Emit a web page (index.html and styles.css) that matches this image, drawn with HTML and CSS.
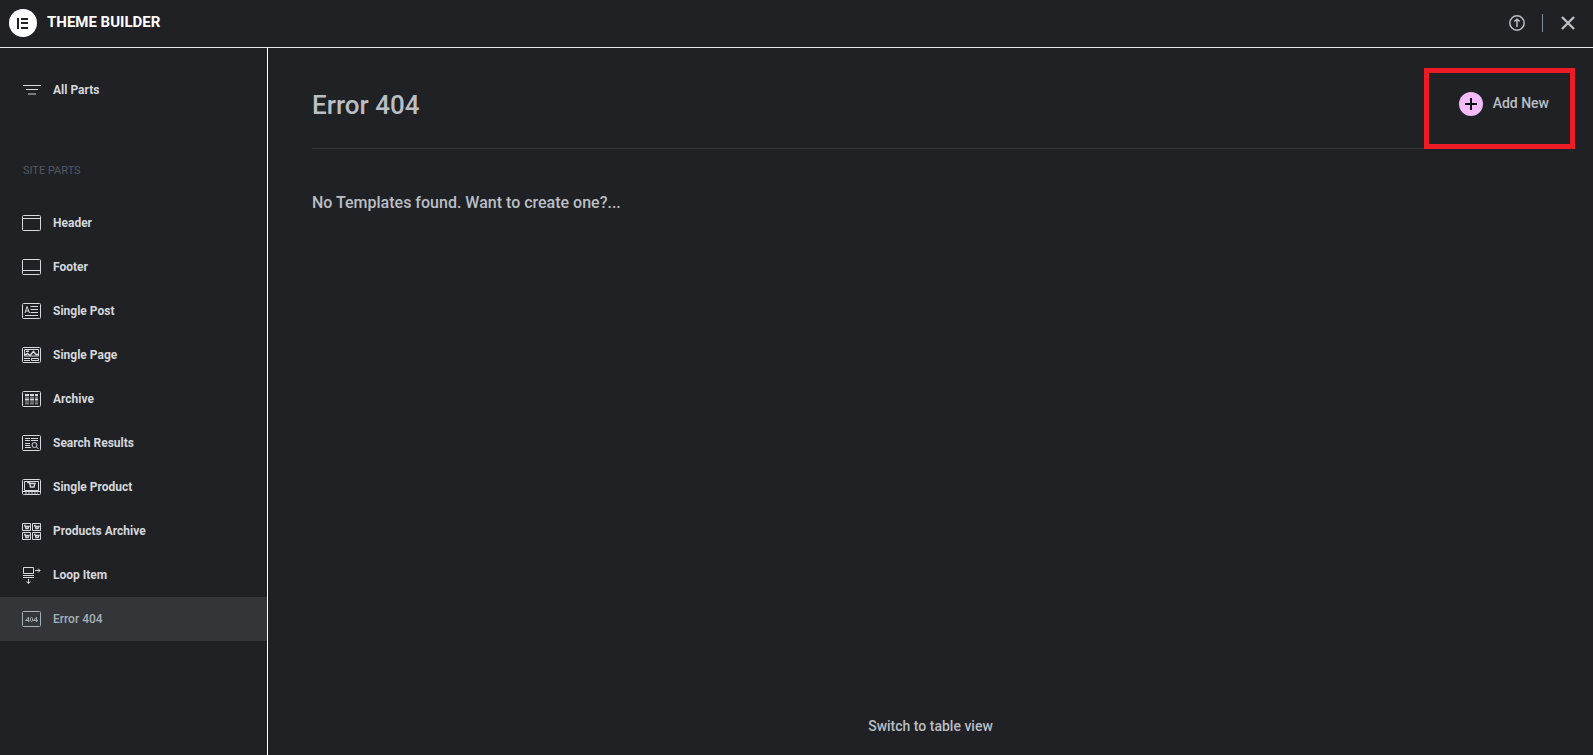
FILE: index.html
```html
<!DOCTYPE html>
<html lang="en">
<head>
    <meta charset="UTF-8">
    <meta name="viewport" content="width=device-width, initial-scale=1.0">
    <title>Theme Builder</title>
    <link rel="stylesheet" href="styles.css">
</head>
<body>

    <!-- Top bar -->
    <header class="top-bar">
        <svg class="logo" viewBox="0 0 28 28" aria-hidden="true">
            <circle cx="14" cy="14" r="14" fill="#fff"/>
            <path d="M8 9h2v11H8zM12 9h7v2h-7zM12 13h7v2h-7zM12 18h7v2h-7z" fill="#202124"/>
        </svg>
        <h1>Theme Builder</h1>
        <div class="top-actions">
            <button class="icon-btn" aria-label="Import">
                <svg width="16" height="16" viewBox="0 0 16 16">
                    <circle cx="8" cy="8" r="7.200" stroke-width="1.500"/>
                    <path d="M8 12V4.500M5.200 6.500L8 4.200l2.800 2.300" stroke-width="1.500"/>
                </svg>
            </button>
            <span class="divider"></span>
            <button class="icon-btn" aria-label="Close">
                <svg width="16" height="16" viewBox="0 0 16 16">
                    <path d="M2 2l12 12M14 2L2 14" stroke-width="2.400"/>
                </svg>
            </button>
        </div>
    </header>

    <div class="layout">

        <!-- Sidebar -->
        <nav class="sidebar">
            <a class="item" href="#">
                <svg class="icon" viewBox="0 0 19 16"><path d="M1 3.500h18M4 7.500h12M6 12h8"/></svg>
                All Parts
            </a>

            <h2>Site Parts</h2>

            <a class="item" href="#">
                <svg class="icon" viewBox="0 0 19 16"><rect x=".5" y=".5" width="18" height="15" rx="1"/><path d="M1 3.500h17"/></svg>
                Header
            </a>
            <a class="item" href="#">
                <svg class="icon" viewBox="0 0 19 16"><rect x=".5" y=".5" width="18" height="15" rx="1"/><path d="M1 11.500h17"/></svg>
                Footer
            </a>
            <a class="item" href="#">
                <svg class="icon" viewBox="0 0 19 16">
                    <rect x=".5" y=".5" width="18" height="15" rx="1"/>
                    <path d="M3 10l2-6.500L7.500 10M4 8h3M8.500 3.500H16M8.500 6.500H16M8.500 9.500H16M3 12.500h13"/>
                </svg>
                Single Post
            </a>
            <a class="item" href="#">
                <svg class="icon" viewBox="0 0 19 16">
                    <rect x=".5" y=".5" width="18" height="15" rx="1"/>
                    <path d="M2.500 2.500h14v6.500h-14z"/>
                    <path d="M3 8l2.500-1.500L8 8.500l3.500-4 2.500 3h2.500M4 4.200h3" stroke-width="1.500"/>
                    <path d="M2 11.500h6M2 13.500h6M9.500 11.500h7v2h-7z"/>
                </svg>
                Single Page
            </a>
            <a class="item" href="#">
                <svg class="icon" viewBox="0 0 19 16">
                    <rect x=".5" y=".5" width="18" height="15" rx="1"/>
                    <path d="M3 4h4M8 4h4M13 4h3M3 8.500h4M8 8.500h4M13 8.500h3" stroke-width="2"/>
                    <path d="M3 6.200h4M8 6.200h4M13 6.200h3M3 11h4M8 11h4M13 11h3M3 12.800h4M8 12.800h4M13 12.800h3" opacity=".7"/>
                </svg>
                Archive
            </a>
            <a class="item" href="#">
                <svg class="icon" viewBox="0 0 19 16">
                    <rect x=".5" y=".5" width="18" height="15" rx="1"/>
                    <path d="M3 3.500h5M9 3.500h7M3 5.500h5M9 5.500h7M3 8.500h5M3 10.500h5M3 12.500h6M14.500 12l2 2"/>
                    <circle cx="12.500" cy="10" r="2.500"/>
                </svg>
                Search Results
            </a>
            <a class="item" href="#">
                <svg class="icon" viewBox="0 0 19 16">
                    <rect x=".5" y=".5" width="18" height="15" rx="1"/>
                    <path d="M2.500 11.500v-9h14v9zM1 12.500h17"/>
                    <path d="M5 3.500h2.500l1 4.500h3.500l1-3.500H8" stroke-width="1.300"/>
                    <path d="M3 14h13" stroke-dasharray="2 1"/>
                </svg>
                Single Product
            </a>
            <a class="item" href="#">
                <svg class="icon" viewBox="0 0 19 16">
                    <path d="M.5.500h8v7h-8zM10.500.500h8v7h-8zM.5 9.500h8v7h-8zM10.500 9.500h8v7h-8z"/>
                    <path d="M2 2.500h1l1 3h2l1-2H4M12 2.500h1l1 3h2l1-2h-3M2 11.500h1l1 3h2l1-2H4M12 11.500h1l1 3h2l1-2h-3" stroke-width="1.300"/>
                </svg>
                Products Archive
            </a>
            <a class="item" href="#">
                <svg class="icon" viewBox="0 0 19 16">
                    <path d="M1.500.500h10v6h-10zM1 8.500h11M1 10.500h11M13 3.500h5M16 1.500l2 2-2 2M6.500 12v4.500M4.500 14.500l2 2 2-2"/>
                </svg>
                Loop Item
            </a>
            <a class="item active" href="#">
                <svg class="icon" viewBox="0 0 19 16">
                    <rect x=".5" y=".5" width="18" height="15" rx="1"/>
                    <path d="M6.500 11V6.200L3.500 9.500H7.500M14.500 11V6.200L11.500 9.500H16"/>
                    <rect x="8.500" y="6.500" width="2" height="4" rx="1"/>
                </svg>
                Error 404
            </a>
        </nav>

        <!-- Content -->
        <main class="content">
            <div class="content-header">
                <h2>Error 404</h2>
                <button class="add-new">
                    <svg width="24" height="24" viewBox="0 0 24 24" aria-hidden="true">
                        <circle cx="12" cy="12" r="12" fill="#f3bafd"/>
                        <path d="M12 6v12M6 12h12" stroke="#0c0d0e" stroke-width="2"/>
                    </svg>
                    <span>Add New</span>
                </button>
                <span class="highlight"></span>
            </div>
            <p class="empty">No Templates found. Want to create one?...</p>
            <a class="switch-view" href="#">Switch to table view</a>
        </main>
    </div>

</body>
</html>
```
FILE: styles.css
```css
* {
    box-sizing: border-box;
}

body {
    display: flex;
    flex-direction: column;
    min-height: 100vh;
    margin: 0;
    font-family: Roboto, sans-serif;
    color: #babfc5;
    background-color: #202124;
}

h1, h2, p {
    margin: 0;
}

a {
    color: inherit;
    text-decoration: none;
}

button {
    padding: 0;
    font-family: inherit;
    color: inherit;
    background: none;
    border: none;
    cursor: pointer;
}

svg {
    display: block;
    flex-shrink: 0;
}

/* Top bar */
.top-bar {
    display: flex;
    align-items: center;
    height: 48px;
    padding: 0 17px 2px 9px;
    border-bottom: 1px solid #e6e9ec;
}

.logo {
    width: 28px;
    height: 28px;
}

.top-bar h1 {
    margin-left: 10px;
    padding-bottom: 2px;
    font-size: 15px;
    line-height: 18px;
    font-weight: 700;
    text-transform: uppercase;
    color: #fff;
}

.top-actions {
    display: flex;
    align-items: center;
    gap: 17px;
    margin-left: auto;
}

.icon-btn svg {
    fill: none;
    stroke: #babfc5;
}

.divider {
    width: 1px;
    height: 18px;
    background-color: #818a96;
}

/* Sidebar */
.layout {
    display: flex;
    flex: 1;
}

.sidebar {
    width: 268px;
    padding-top: 20px;
    border-right: 1px solid #fff;
}

.sidebar h2 {
    margin: 49px 0 20px;
    padding-left: 23px;
    font-size: 11px;
    line-height: 20px;
    font-weight: 400;
    text-transform: uppercase;
    color: #515962;
}

.item {
    display: flex;
    align-items: center;
    gap: 12px;
    height: 44px;
    padding-left: 22px;
    font-size: 12px;
    font-weight: 700;
    color: #d5d8dc;
}

.item.active {
    font-weight: 500;
    color: #a4afb7;
    background-color: #343538;
}

.icon {
    width: 19px;
    height: 16px;
    overflow: visible;
    fill: none;
    stroke: currentColor;
}

/* Content */
.content {
    display: flex;
    flex: 1;
    flex-direction: column;
    padding: 20px 44px;
}

.content-header {
    position: relative;
    display: flex;
    align-items: center;
    justify-content: space-between;
    height: 81px;
    padding-bottom: 8px;
    border-bottom: 1px solid #343538;
}

.content-header h2 {
    padding-top: 2px;
    font-size: 26px;
    line-height: 32px;
    font-weight: 500;
}

.add-new {
    display: flex;
    align-items: center;
    gap: 10px;
    font-size: 14px;
    font-weight: 500;
}

.add-new span {
    padding-bottom: 2px;
}

/* Red frame round the add button */
.highlight {
    position: absolute;
    top: 0;
    right: -26px;
    width: 151px;
    height: 81px;
    border: 5px solid #ed1c24;
    pointer-events: none;
}

.empty {
    margin-top: 44px;
    font-size: 16px;
    line-height: 20px;
    font-weight: 500;
}

.switch-view {
    align-self: center;
    margin-top: auto;
    font-size: 14px;
    line-height: 18px;
    font-weight: 500;
}
```
